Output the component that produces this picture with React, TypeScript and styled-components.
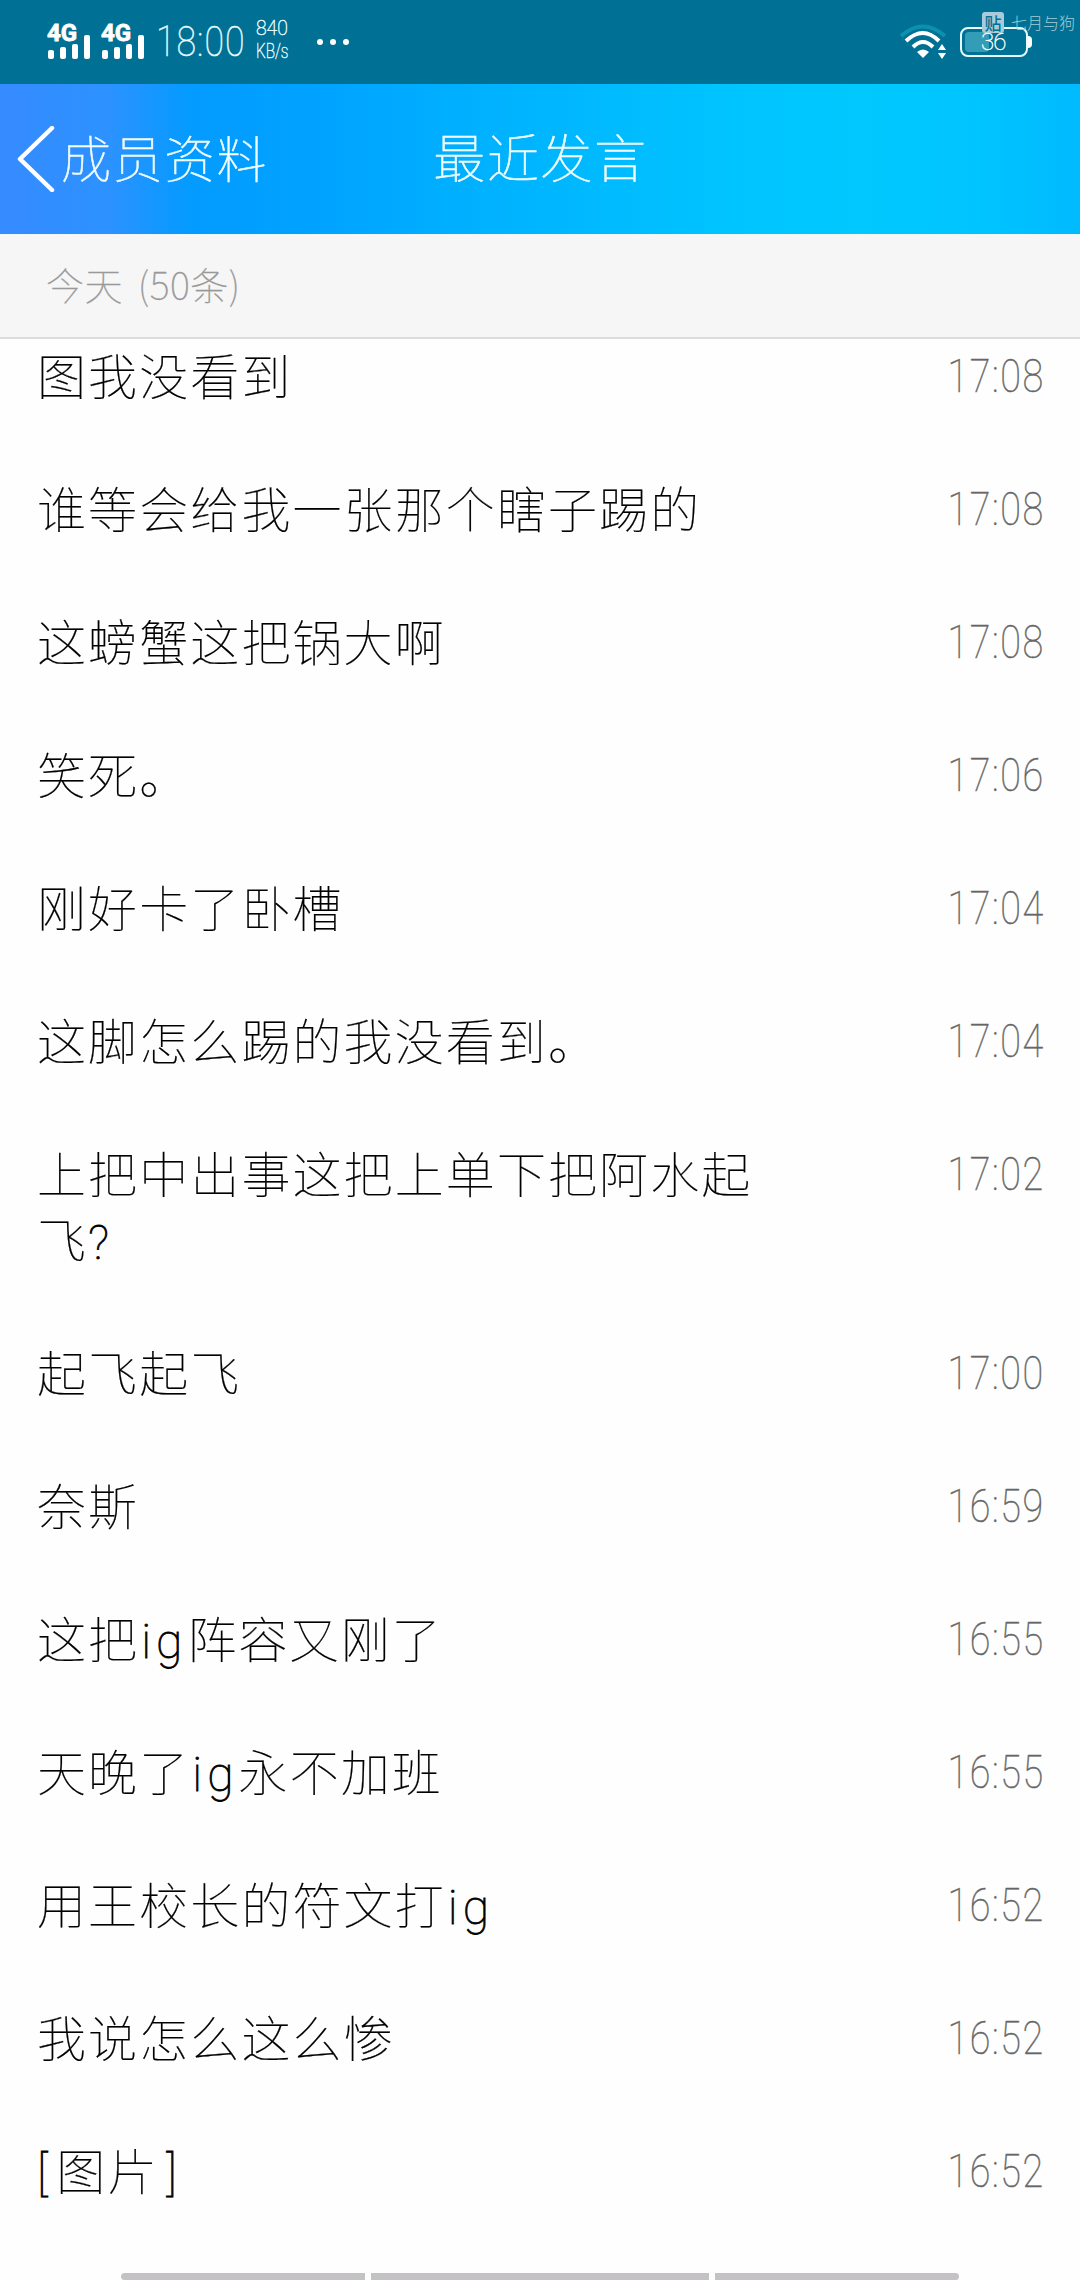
import React from "react";
import styled, { createGlobalStyle } from "styled-components";

const Global = createGlobalStyle`
  * { box-sizing: border-box; }
  body { margin: 0; background: #fff; }
`;

const Screen = styled.div`
  width: 1080px;
  height: 2280px;
  display: flex;
  flex-direction: column;
  position: relative;
  overflow: hidden;
  background: #fefefe;
  font-family: "Noto Sans CJK SC", sans-serif;
  font-weight: 100;
  white-space: nowrap;
`;

const Condensed = styled.span<{ $scale: number; $origin?: string; $spacing?: number }>`
  display: block;
  font-family: Roboto, "Noto Sans CJK SC", sans-serif;
  font-weight: 100;
  letter-spacing: ${(p) => p.$spacing ?? 0}px;
  -webkit-text-stroke: 0.5px currentColor;
  transform: scaleX(${(p) => p.$scale});
  transform-origin: ${(p) => p.$origin ?? "left"} center;
`;

const StatusBar = styled.div`
  height: 84px;
  flex: none;
  display: flex;
  align-items: center;
  background: #007194;
  color: #e8fbff;
  padding-left: 47px;
  position: relative;
`;

const Signals = styled.div`
  display: flex;
  gap: 11px;
`;

const Signal = styled.div`
  width: 43px;
  height: 36px;
  position: relative;
  color: #fff;
`;

const Network = styled.span`
  position: absolute;
  left: 0;
  top: -1px;
  font: 700 24px/20px Roboto, sans-serif;
  -webkit-text-stroke: 0.8px #fff;
`;

const Clock = styled.div`
  margin-left: 12px;
  width: 100px;
  font-size: 42px;
  line-height: 84px;
`;

const Speed = styled.div`
  width: 52px;
  font-size: 21px;
  line-height: 23px;
  margin-top: -4px;
`;

const Dots = styled.div`
  display: flex;
  gap: 7px;
  margin-left: 9px;
`;

const Dot = styled.i`
  width: 6px;
  height: 6px;
  border-radius: 50%;
  background: #fff;
`;

const StatusRight = styled.div`
  margin-left: auto;
  margin-right: 52px;
  display: flex;
  align-items: center;
  gap: 14px;
`;

const Battery = styled.div`
  width: 68px;
  height: 30px;
  border: 2px solid #e8fbff;
  border-radius: 8px;
  padding: 3px;
  position: relative;
  &::before {
    content: "";
    display: block;
    width: 24px;
    height: 20px;
    border-radius: 4px;
    background: #339cb6;
  }
  &::after {
    content: "";
    position: absolute;
    right: -6px;
    top: 7px;
    width: 4px;
    height: 12px;
    background: #fff;
    border-radius: 0 4px 4px 0;
  }
`;

const Charge = styled.span`
  position: absolute;
  left: 19px;
  top: 0;
  z-index: 2;
  font: 100 24px/26px Roboto, sans-serif;
  letter-spacing: -1px;
  color: #fff;
  -webkit-text-stroke: 0.4px #fff;
`;

const Watermark = styled.div`
  position: absolute;
  left: 982px;
  top: 11px;
  display: flex;
  align-items: center;
  gap: 7px;
  font-size: 16px;
  line-height: 22px;
  font-weight: 300;
  color: #a3cbd8;
`;

const Badge = styled.span`
  width: 22px;
  height: 21px;
  border-radius: 3px;
  background: #a9cbd9;
  color: #007194;
  text-align: center;
  font-size: 17px;
  line-height: 21px;
  font-weight: 500;
`;

const NavBar = styled.header`
  height: 150px;
  flex: none;
  display: grid;
  grid-template-columns: 1fr auto 1fr;
  align-items: center;
  color: #f2fdff;
  -webkit-text-stroke: 0.5px currentColor;
  background: linear-gradient(90deg, #368bff 0, #2c92ff 110px, #049bff 190px, #00a2ff 310px, #00afff 450px, #00baff 600px, #00c4ff 730px, #00c9ff 860px, #00c4ff 980px, #00baff 1080px);
`;

const Back = styled.div`
  display: flex;
  align-items: center;
  gap: 6px;
  padding-left: 17px;
  font-size: 50px;
  letter-spacing: 1.8px;
`;

const BackLabel = styled.span`
  padding-bottom: 6px;
`;

const Title = styled.h1`
  margin: 0;
  padding: 0 0 8px 1px;
  font-size: 52px;
  letter-spacing: 1.6px;
  font-weight: 100;
`;

const SectionBar = styled.div`
  height: 105px;
  flex: none;
  display: flex;
  align-items: center;
  padding: 0 0 6px 46px;
  background: #f6f6f6;
  border-top: 1px solid #eef4f7;
  border-bottom: 2px solid #dcdcdc;
  color: #999;
  font-size: 38px;
  letter-spacing: 0.5px;
  word-spacing: 6px;
  -webkit-text-stroke: 0.3px currentColor;
`;

const List = styled.main`
  flex: 1;
  min-height: 0;
  overflow: hidden;
`;

const Rows = styled.div`
  margin-top: -28px;
`;

const Row = styled.div`
  display: flex;
  justify-content: space-between;
  padding: 33px 36px 34px 37px;
`;

const Message = styled.div`
  width: 730px;
  margin: -3px 0 3px;
  white-space: normal;
  font-size: 49px;
  letter-spacing: 2.1px;
  line-height: 66px;
  color: #000;
  -webkit-text-stroke: 0.2px currentColor;
`;

const Latin = styled.span<{ $before: number; $spacing: number }>`
  margin-left: ${(p) => p.$before}px;
  font-family: Roboto, sans-serif;
  font-size: 48px;
  line-height: 1;
  letter-spacing: ${(p) => p.$spacing}px;
  -webkit-text-stroke: 0.8px currentColor;
`;

const Time = styled.div`
  margin: -1px -1px 1px 0;
  font-size: 46px;
  line-height: 66px;
  color: #666;
`;

const HomeBars = styled.div`
  position: absolute;
  left: 121px;
  right: 121px;
  bottom: 0;
  height: 7px;
  display: grid;
  grid-template-columns: 244px 1fr 244px;
  gap: 6px;
`;

const Bar = styled.i<{ $r?: string }>`
  background: #c5c2c6;
  border-radius: ${(p) => p.$r ?? "0"};
`;

const messages: [string, string][] = [
  ["图我没看到", "17:08"],
  ["谁等会给我一张那个瞎子踢的", "17:08"],
  ["这螃蟹这把锅大啊", "17:08"],
  ["笑死。", "17:06"],
  ["刚好卡了卧槽", "17:04"],
  ["这脚怎么踢的我没看到。", "17:04"],
  ["上把中出事这把上单下把阿水起飞?", "17:02"],
  ["起飞起飞", "17:00"],
  ["奈斯", "16:59"],
  ["这把ig阵容又刚了", "16:55"],
  ["天晚了ig永不加班", "16:55"],
  ["用王校长的符文打ig", "16:52"],
  ["我说怎么这么惨", "16:52"],
  ["[图片]", "16:52"],
];

const latinSpacing: Record<string, [number, number]> = {
  ig: [2, 5],
  "[": [0, 9],
  "]": [8, 0],
  "?": [0, 0],
};

const withLatin = (text: string) =>
  text
    .split(/([\x21-\x7e]+)/)
    .filter(Boolean)
    .map((part, i) => {
      const spacing = latinSpacing[part];
      return spacing ? (
        <Latin key={i} $before={spacing[0]} $spacing={spacing[1]}>{part}</Latin>
      ) : (
        part
      );
    });

const SignalIcon = () => (
  <Signal>
    <Network>4G</Network>
    <svg width="43" height="36" viewBox="0 0 43 36" fill="#fff">
      <rect x="1" y="26" width="6" height="9" rx="2" />
      <rect x="13" y="23" width="6" height="12" rx="2" />
      <rect x="25" y="20" width="6" height="15" rx="2" />
      <rect x="37" y="11" width="6" height="24" rx="2" />
    </svg>
  </Signal>
);

export default function App() {
  return (
    <Screen>
      <Global />
      <StatusBar>
        <Signals>
          <SignalIcon />
          <SignalIcon />
        </Signals>
        <Clock><Condensed $scale={0.85} $spacing={1.2}>18:00</Condensed></Clock>
        <Speed>
          <Condensed $scale={0.92}>840</Condensed>
          <Condensed $scale={0.73}>KB/s</Condensed>
        </Speed>
        <Dots><Dot /><Dot /><Dot /></Dots>
        <StatusRight>
          <svg width="46" height="36" viewBox="0 0 46 36" fill="none">
            <path d="M1 12Q23 -7 45 12" stroke="#0a91ae" strokeWidth="4" />
            <path d="M6 17Q23 1 39 17" stroke="#fff" strokeWidth="4" />
            <path d="M13 23Q23 13 33 23" stroke="#fff" strokeWidth="4" />
            <path d="M17 28Q23 23 29 28L23 34Z" fill="#fff" />
            <path d="M38 26l4-6 4 6zM38 29l4 6 4-6z" fill="#fff" />
          </svg>
          <Battery><Charge>36</Charge></Battery>
        </StatusRight>
        <Watermark><Badge>贴</Badge>七月与狗</Watermark>
      </StatusBar>
      <NavBar>
        <Back>
          <svg width="38" height="66" viewBox="0 0 38 66" fill="none" stroke="#fff" strokeWidth="4.5" strokeLinecap="round" strokeLinejoin="round">
            <path d="M35 2L3 33L35 64" />
          </svg>
          <BackLabel>成员资料</BackLabel>
        </Back>
        <Title>最近发言</Title>
      </NavBar>
      <SectionBar>今天 (50条)</SectionBar>
      <List>
        <Rows>
          {messages.map(([text, time], i) => (
            <Row key={i}>
              <Message>{withLatin(text)}</Message>
              <Time><Condensed $scale={0.82} $origin="right" $spacing={2}>{time}</Condensed></Time>
            </Row>
          ))}
        </Rows>
      </List>
      <HomeBars>
        <Bar $r="4px 0 0 4px" />
        <Bar />
        <Bar $r="0 4px 4px 0" />
      </HomeBars>
    </Screen>
  );
}
